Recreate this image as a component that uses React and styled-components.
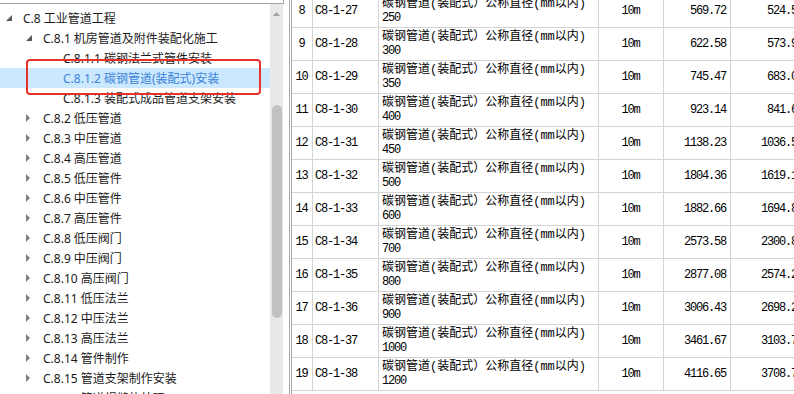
import styled, { createGlobalStyle } from 'styled-components';

const GlobalStyle = createGlobalStyle`
  html, body {
    margin: 0;
    padding: 0;
    background: #fff;
    overflow: hidden;
  }
  * { box-sizing: border-box; }
`;

const Page = styled.div`
  display: flex;
  width: 794px;
  height: 394px;
  overflow: hidden;
  background: #fff;
`;

const TreePanel = styled.div`
  position: relative;
  width: 284px;
  flex-shrink: 0;
  display: flex;
  flex-direction: column;
`;

const SearchEdge = styled.div`
  height: 4px;
  border-right: 1px solid #a6a6a6;
  border-bottom: 1px solid #a6a6a6;
`;

const TreeBody = styled.div`
  flex: 1;
  display: flex;
  min-height: 0;
`;

const TreeList = styled.div`
  flex: 1;
  padding-top: 4px;
  overflow: hidden;
`;

const TreeRow = styled.div`
  display: flex;
  align-items: center;
  height: 20px;
  padding-left: ${p => p.$level * 20}px;
  background: ${p => (p.$selected ? '#cce8ff' : 'transparent')};
  color: ${p => (p.$selected ? '#3b84d8' : '#1a1a1a')};
  font-family: "Noto Sans", "Noto Sans CJK SC", sans-serif;
  font-size: 12px;
  white-space: nowrap;
`;

const Toggle = styled.span`
  width: 23px;
  flex-shrink: 0;
  display: flex;
  align-items: center;
  svg { margin-left: 6px; display: block; }
`;

const Track = styled.div`
  width: 13px;
  margin-right: 1px;
  background: #e9e9e9;
  display: flex;
  flex-direction: column;
  align-items: center;
`;

const UpArrow = styled.svg`
  margin-top: 8px;
`;

const Thumb = styled.div`
  margin-top: 89px;
  width: 10px;
  height: 213px;
  border-radius: 5px;
  background: #c1c1c1;
`;

const Marker = styled.div`
  position: absolute;
  left: 26px;
  top: 59px;
  width: 235px;
  height: 36px;
  border: 2px solid #e5322b;
  border-radius: 4px;
  pointer-events: none;
`;

const TablePane = styled.div`
  flex: 1;
  margin-left: 5px;
  border-left: 3px double #a9a9a9;
  overflow: hidden;
  min-width: 0;
`;

const Grid = styled.table`
  margin-top: -5px;
  border-collapse: separate;
  border-spacing: 0;
  table-layout: fixed;
  width: ${21 + 66 + 220 + 65 + 67 + 77}px;
  color: #000;
  font-size: 12px;
`;

const Cell = styled.td`
  width: ${p => p.$w}px;
  height: 33px;
  padding: 0 ${p => (p.$align === 'right' ? 4 : 2)}px 0 ${p => (p.$align === 'left' ? 2 : 1)}px;
  border-right: 1px solid #d4d4d4;
  border-bottom: 1px solid #d4d4d4;
  text-align: ${p => p.$align};
  vertical-align: middle;
  white-space: nowrap;
  overflow: hidden;
  font-family: "Liberation Mono", "Noto Sans CJK SC", monospace;
  letter-spacing: -1.2px;
`;

const NameCell = styled(Cell)`
  padding-left: 3px;
  letter-spacing: 0;
  line-height: 14px;
`;

const NameLine = styled.div`
  height: 14px;
`;

const Spec = styled.div`
  height: 14px;
  letter-spacing: -1.2px;
`;

const tree = [
  { level: 0, label: 'C.8 工业管道工程', state: 'open' },
  { level: 1, label: 'C.8.1 机房管道及附件装配化施工', state: 'open' },
  { level: 2, label: 'C.8.1.1 碳钢法兰式管件安装' },
  { level: 2, label: 'C.8.1.2 碳钢管道(装配式)安装', selected: true },
  { level: 2, label: 'C.8.1.3 装配式成品管道支架安装' },
  { level: 1, label: 'C.8.2 低压管道', state: 'closed' },
  { level: 1, label: 'C.8.3 中压管道', state: 'closed' },
  { level: 1, label: 'C.8.4 高压管道', state: 'closed' },
  { level: 1, label: 'C.8.5 低压管件', state: 'closed' },
  { level: 1, label: 'C.8.6 中压管件', state: 'closed' },
  { level: 1, label: 'C.8.7 高压管件', state: 'closed' },
  { level: 1, label: 'C.8.8 低压阀门', state: 'closed' },
  { level: 1, label: 'C.8.9 中压阀门', state: 'closed' },
  { level: 1, label: 'C.8.10 高压阀门', state: 'closed' },
  { level: 1, label: 'C.8.11 低压法兰', state: 'closed' },
  { level: 1, label: 'C.8.12 中压法兰', state: 'closed' },
  { level: 1, label: 'C.8.13 高压法兰', state: 'closed' },
  { level: 1, label: 'C.8.14 管件制作', state: 'closed' },
  { level: 1, label: 'C.8.15 管道支架制作安装', state: 'closed' },
  { level: 1, label: 'C.8.16 管道焊缝热处理', state: 'closed' },
];

const rows = [
  [8, 'C8-1-27', '250', '569.72', '524.53'],
  [9, 'C8-1-28', '300', '622.58', '573.96'],
  [10, 'C8-1-29', '350', '745.47', '683.05'],
  [11, 'C8-1-30', '400', '923.14', '841.63'],
  [12, 'C8-1-31', '450', '1138.23', '1036.57'],
  [13, 'C8-1-32', '500', '1804.36', '1619.12'],
  [14, 'C8-1-33', '600', '1882.66', '1694.81'],
  [15, 'C8-1-34', '700', '2573.58', '2300.84'],
  [16, 'C8-1-35', '800', '2877.08', '2574.25'],
  [17, 'C8-1-36', '900', '3006.43', '2698.21'],
  [18, 'C8-1-37', '1000', '3461.67', '3103.76'],
  [19, 'C8-1-38', '1200', '4116.65', '3708.72'],
];

function Arrow({ state }) {
  if (state === 'open') {
    return (
      <svg width="6" height="6" viewBox="0 0 6 6">
        <path d="M6 0 L6 6 L0 6 Z" fill="#595959" />
      </svg>
    );
  }
  if (state === 'closed') {
    return (
      <svg width="4" height="8" viewBox="0 0 4 8">
        <path d="M0 0 L4 4 L0 8 Z" fill="#7a7a7a" />
      </svg>
    );
  }
  return null;
}

export default function App() {
  return (
    <>
      <GlobalStyle />
      <Page>
        <TreePanel>
          <SearchEdge />
          <TreeBody>
            <TreeList>
              {tree.map((item, i) => (
                <TreeRow key={i} $level={item.level} $selected={item.selected}>
                  <Toggle><Arrow state={item.state} /></Toggle>
                  {item.label}
                </TreeRow>
              ))}
            </TreeList>
            <Track>
              <UpArrow width="7" height="4" viewBox="0 0 7 4">
                <path d="M3.5 0 L7 4 L0 4 Z" fill="#a3a3a3" />
              </UpArrow>
              <Thumb />
            </Track>
          </TreeBody>
          <Marker />
        </TreePanel>

        <TablePane>
          <Grid>
            <tbody>
              {rows.map(([no, code, dn, price, cost]) => (
                <tr key={no}>
                  <Cell $w={21} $align="center">{no}</Cell>
                  <Cell $w={66} $align="left">{code}</Cell>
                  <NameCell $w={220} $align="left">
                    <NameLine>碳钢管道(装配式）公称直径(mm以内)</NameLine>
                    <Spec>{dn}</Spec>
                  </NameCell>
                  <Cell $w={65} $align="center">10m</Cell>
                  <Cell $w={67} $align="right">{price}</Cell>
                  <Cell $w={77} $align="right">{cost}</Cell>
                </tr>
              ))}
            </tbody>
          </Grid>
        </TablePane>
      </Page>
    </>
  );
}
